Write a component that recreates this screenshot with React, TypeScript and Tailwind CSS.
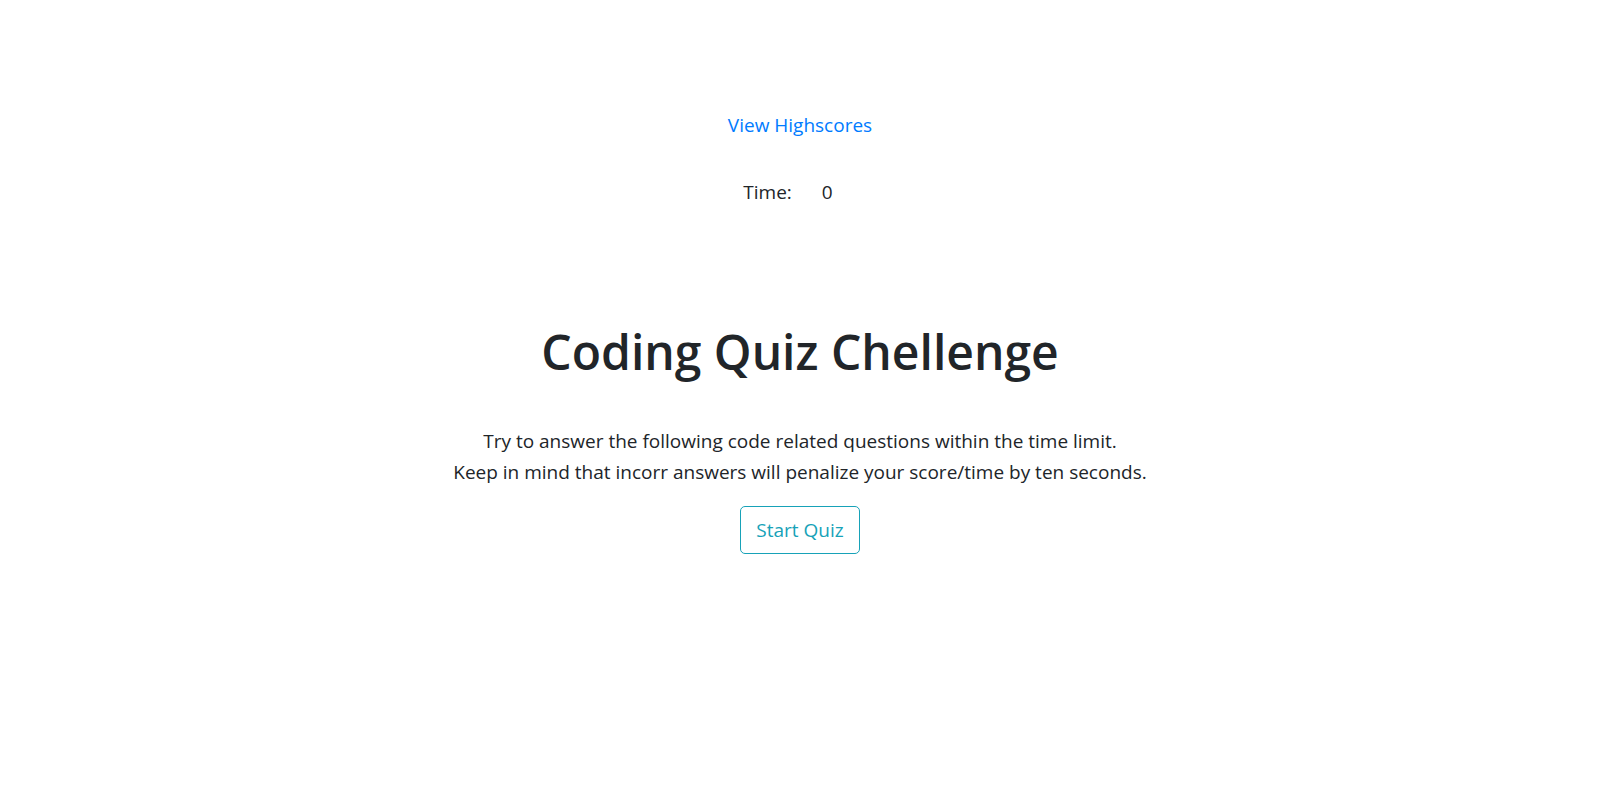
import React from "react";

export default function App() {
  return (
    <div className="min-h-[785px] bg-white text-[#212529] font-['Open_Sans',sans-serif] flex flex-col items-center text-center">
      <header className="flex flex-col items-center pt-[110px]">
        <a href="#" className="text-[19px] leading-[30px] text-[#007bff]">
          View Highscores
        </a>
        <div className="mt-[37px] mr-[24px] flex gap-[30px] text-[19px] leading-[30px]">
          <span>Time:</span>
          <span>0</span>
        </div>
      </header>
      <main className="flex flex-col items-center mt-[115px]">
        <h1 className="text-[48px] leading-[60px] font-semibold">Coding Quiz Chellenge</h1>
        <p className="mt-[44px] text-[19px] leading-[31px]">
          Try to answer the following code related questions within the time limit.
          <br />
          Keep in mind that incorr answers will penalize your score/time by ten seconds.
        </p>
        <button className="mt-[18px] px-[15px] py-[8px] text-[19px] leading-[30px] text-[#17a2b8] border border-[#17a2b8] rounded-[5px]">
          Start Quiz
        </button>
      </main>
    </div>
  );
}
